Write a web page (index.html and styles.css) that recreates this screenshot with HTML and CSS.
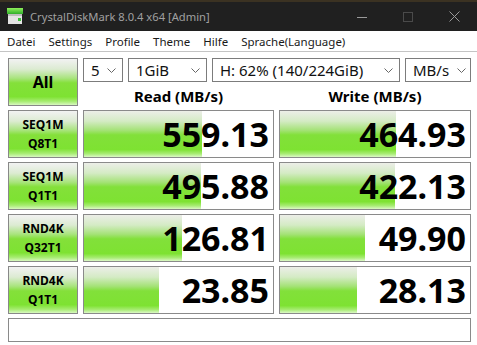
FILE: index.html
```html
<!DOCTYPE html>
<html lang="de">

<head>
    <meta charset="UTF-8">
    <meta name="viewport" content="width=device-width, initial-scale=1.0">
    <title>CrystalDiskMark 8.0.4 x64 [Admin]</title>
    <link rel="stylesheet" href="styles.css">
</head>

<body>

    <div class="titlebar">
        <svg class="app-icon" width="16" height="17" viewBox="0 0 16 17">
            <defs>
                <linearGradient id="lid" x1="0" y1="0" x2="0" y2="1">
                    <stop offset="0" stop-color="#8ef05a" />
                    <stop offset="1" stop-color="#2fae2a" />
                </linearGradient>
            </defs>
            <rect x="0" y="0" width="16" height="6" fill="url(#lid)" />
            <rect x="1" y="6" width="14" height="10" fill="#e4e4e4" />
            <rect x="1" y="6" width="14" height="2" fill="#bdbdbd" />
            <rect x="11" y="10" width="3" height="3" fill="#3cc03a" />
        </svg>
        <span class="title">CrystalDiskMark 8.0.4 x64 [Admin]</span>
        <div class="controls">
            <span class="ctl"><svg width="10" height="10" viewBox="0 0 10 10"><path d="M0 5.5h10" stroke="#9a9a9a" /></svg></span>
            <span class="ctl"><svg width="10" height="10" viewBox="0 0 10 10"><rect x="0.5" y="0.5" width="9" height="9" fill="none" stroke="#4a4a4a" /></svg></span>
            <span class="ctl"><svg width="11" height="11" viewBox="0 0 11 11"><path d="M0.5 0.5l10 10M10.5 0.5l-10 10" stroke="#9a9a9a" /></svg></span>
        </div>
    </div>

    <div class="menubar">
        <span>Datei</span>
        <span>Settings</span>
        <span>Profile</span>
        <span>Theme</span>
        <span>Hilfe</span>
        <span>Sprache(Language)</span>
    </div>

    <div class="main">
        <div class="btn btn-all">All</div>

        <div class="combos">
            <div class="combo c-count">5 <svg width="9" height="5" viewBox="0 0 9 5"><path d="M0.5 0.5l4 4 4-4" fill="none" stroke="#666" /></svg></div>
            <div class="combo c-size">1GiB <svg width="9" height="5" viewBox="0 0 9 5"><path d="M0.5 0.5l4 4 4-4" fill="none" stroke="#666" /></svg></div>
            <div class="combo c-drive">H: 62% (140/224GiB) <svg width="9" height="5" viewBox="0 0 9 5"><path d="M0.5 0.5l4 4 4-4" fill="none" stroke="#666" /></svg></div>
            <div class="combo c-unit">MB/s <svg width="9" height="5" viewBox="0 0 9 5"><path d="M0.5 0.5l4 4 4-4" fill="none" stroke="#666" /></svg></div>
        </div>

        <div class="head">Read (MB/s)</div>
        <div class="head">Write (MB/s)</div>

        <div class="btn btn-test">SEQ1M<br>Q8T1</div>
        <div class="value"><div class="bar" style="width: 118px"></div><span>559.13</span></div>
        <div class="value"><div class="bar" style="width: 116px"></div><span>464.93</span></div>

        <div class="btn btn-test">SEQ1M<br>Q1T1</div>
        <div class="value"><div class="bar" style="width: 117px"></div><span>495.88</span></div>
        <div class="value"><div class="bar" style="width: 115px"></div><span>422.13</span></div>

        <div class="btn btn-test">RND4K<br>Q32T1</div>
        <div class="value"><div class="bar" style="width: 98px"></div><span>126.81</span></div>
        <div class="value"><div class="bar" style="width: 85px"></div><span>49.90</span></div>

        <div class="btn btn-test">RND4K<br>Q1T1</div>
        <div class="value"><div class="bar" style="width: 75px"></div><span>23.85</span></div>
        <div class="value"><div class="bar" style="width: 77px"></div><span>28.13</span></div>

        <div class="comment"></div>
    </div>

</body>

</html>
```

FILE: styles.css
```css
* {
    margin: 0;
    padding: 0;
    box-sizing: border-box;
}

body {
    width: 477px;
    height: 345px;
    overflow: hidden;
    background: #fff;
    font-family: "Noto Sans", "Open Sans", sans-serif;
    color: #000;
}

/* title bar */
.titlebar {
    height: 31px;
    background: #202020;
    border-top: 2px solid #3b3222;
    display: flex;
    align-items: center;
}

.app-icon {
    margin-left: 7px;
    margin-top: -1px;
}

.title {
    margin-left: 7px;
    font-size: 11.2px;
    color: #a0a0a0;
}

.controls {
    margin-left: auto;
    display: flex;
    height: 100%;
}

.ctl {
    width: 46px;
    display: flex;
    align-items: center;
    justify-content: center;
}

/* menu */
.menubar {
    height: 21px;
    display: flex;
    align-items: center;
    padding-left: 0.5px;
    border-bottom: 1px solid #c4c4c4;
    font-size: 11.5px;
    color: #1a1a1a;
}

.menubar span {
    padding: 0 6.5px;
}

/* main panel */
.main {
    display: grid;
    grid-template-columns: 70px 191px 192px;
    grid-template-rows: 24px 20px repeat(4, 48px) 24px;
    gap: 4px 5px;
    padding: 6px 0 0 8px;
}

.btn {
    border: 1px solid #888;
    background: linear-gradient(to bottom, #f2f2f2 0%, #dcebd2 22%, #a8e47c 42%, #84e03a 52%, #7ee232 82%, #a6ec70 92%, #d8f8c0 100%);
    display: flex;
    align-items: center;
    justify-content: center;
    text-align: center;
    font-weight: bold;
}

.btn-all {
    grid-row: 1 / 3;
    font-size: 16px;
}

.btn-test {
    font-size: 12px;
    line-height: 19px;
}

.combos {
    grid-column: 2 / 4;
    display: flex;
    gap: 5px;
}

.combo {
    border: 1px solid #7c7c7c;
    background: #fff;
    display: flex;
    align-items: center;
    justify-content: space-between;
    padding: 0 6px 0 7px;
    font-size: 15px;
    color: #111;
}

.c-count {
    width: 40px;
}

.c-size {
    width: 79px;
}

.c-drive {
    width: 188px;
}

.c-unit {
    width: 66px;
    padding-right: 4px;
}

.head {
    font-size: 15px;
    font-weight: bold;
    text-align: center;
    line-height: 20px;
}

.value {
    position: relative;
    border: 1px solid #8a8a8a;
    background: #fff;
    display: flex;
    align-items: center;
    justify-content: flex-end;
    padding-right: 4px;
    overflow: hidden;
}

.value .bar {
    position: absolute;
    left: 0;
    top: 0;
    bottom: 0;
    background: linear-gradient(to bottom, #eceee8 0%, #d4ebc4 22%, #a4e276 42%, #82e03a 52%, #7ee232 84%, #a8ec74 93%, #dcf8c6 100%);
}

.value span {
    position: relative;
    font-size: 34px;
    font-weight: bold;
    line-height: 1;
}

.comment {
    grid-column: 1 / 4;
    border: 1px solid #8a8a8a;
    background: #fff;
}
```
